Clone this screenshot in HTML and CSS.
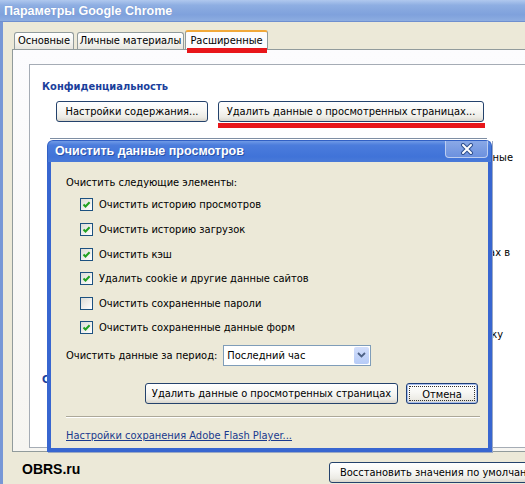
FILE: index.html
```html
<!DOCTYPE html>
<html lang="ru">
<head>
<meta charset="utf-8">
<title>Параметры Google Chrome</title>
<link rel="stylesheet" href="styles.css">
</head>
<body>
<div class="win">
  <div class="titlebar">Параметры Google Chrome</div>
  <div class="client">
    <div class="tabs">
      <div class="tab t1">Основные</div>
      <div class="tab t2">Личные материалы</div>
      <div class="tab active">Расширенные<span class="mark"></span></div>
    </div>
    <div class="page">
      <div class="scroll">
        <div class="heading">Конфиденциальность</div>
        <div class="btnrow">
          <button class="btn b-content">Настройки содержания...</button>
          <div class="marked">
            <button class="btn b-clear">Удалить данные о просмотренных страницах...</button>
            <div class="redbar"></div>
          </div>
        </div>
        <div class="rule"></div>
        <div class="tail tail1">Использовать подсказки и другие данные</div>
        <div class="tail tail2">Отправлять отчеты об ошибках в</div>
        <div class="tail tail3">Включить проверку</div>
        <div class="subhead">Сеть</div>
      </div>
    </div>
    <div class="footer">
      <span class="brand">OBRS.ru</span>
      <button class="btn restore">Восстановить значения по умолчанию</button>
    </div>
  </div>

  <div class="dialog">
    <div class="dlg-title">
      <span>Очистить данные просмотров</span>
      <span class="close"><svg width="14" height="12" viewBox="0 0 14 12"><path d="M3 2 L11 10 M11 2 L3 10" stroke="#30508f" stroke-width="4" stroke-linecap="round"/><path d="M3 2 L11 10 M11 2 L3 10" stroke="#ffffff" stroke-width="2" stroke-linecap="round"/></svg></span>
    </div>
    <div class="dlg-body">
      <div class="lead">Очистить следующие элементы:</div>
      <div class="checks">
        <label class="row"><span class="cb on"></span>Очистить историю просмотров</label>
        <label class="row"><span class="cb on"></span>Очистить историю загрузок</label>
        <label class="row"><span class="cb on"></span>Очистить кэш</label>
        <label class="row"><span class="cb on"></span>Удалить cookie и другие данные сайтов</label>
        <label class="row"><span class="cb"></span>Очистить сохраненные пароли</label>
        <label class="row"><span class="cb on"></span>Очистить сохраненные данные форм</label>
      </div>
      <div class="period">
        <span>Очистить данные за период:</span>
        <div class="select"><span class="select-text">Последний час</span><span class="select-btn"><svg width="9" height="6" viewBox="0 0 9 6"><path d="M1 1 L4.5 4.5 L8 1" fill="none" stroke="#4d6185" stroke-width="1.8"/></svg></span></div>
      </div>
      <div class="actions">
        <button class="btn b-do">Удалить данные о просмотренных страницах</button>
        <button class="btn b-cancel"><span class="focus">Отмена</span></button>
      </div>
      <div class="sep"></div>
      <a class="link" href="#">Настройки сохранения Adobe Flash Player...</a>
    </div>
  </div>
</div>
</body>
</html>
```

FILE: styles.css
```css
* { box-sizing: border-box; }
html, body { margin: 0; padding: 0; }
body {
  width: 525px;
  height: 484px;
  overflow: hidden;
  font-family: "DejaVu Sans Condensed", "DejaVu Sans", sans-serif;
  font-size: 11px;
  color: #000;
  background: #ece9d8;
}
.win {
  position: relative;
  width: 525px;
  height: 484px;
  overflow: hidden;
  background: #ece9d8;
}
.titlebar {
  height: 22px;
  padding-left: 4px;
  line-height: 22px;
  font-family: "Liberation Sans", Arial, sans-serif;
  font-size: 12.5px;
  font-weight: bold;
  color: #fff;
  background: linear-gradient(#b0c8ee, #8eaee2 25%, #7fa1dc 70%, #8dade1);
  border-bottom: 1px solid #6f8fcf;
  text-shadow: 0 0 1px #6d8cc8;
}
.client {
  height: 462px;
  border-left: 3px solid #7797d6;
  display: flex;
  flex-direction: column;
}
.tabs {
  display: flex;
  align-items: flex-end;
  height: 27px;
  padding-left: 11px;
}
.tab {
  height: 17px;
  line-height: 16px;
  border: 1px solid #919b9c;
  border-bottom: 0;
  border-radius: 3px 3px 0 0;
  background: linear-gradient(#ffffff, #f3f3ef 60%, #e6e5de);
  white-space: nowrap;
  text-align: center;
}
.t1 { width: 60px; margin-right: 3px; }
.t2 { width: 107px; margin-right: 1px; }
.tab.active {
  position: relative;
  width: 83px;
  height: 19px;
  padding-top: 1px;
  background: #fcfcfe;
  border-top: 2px solid #f1a93b;
}
.mark {
  position: absolute;
  left: 1px;
  right: 0;
  bottom: -4px;
  height: 5px;
  background: #e8161a;
}
.page {
  margin-left: 9px;
  height: 403px;
  border: 1px solid #919b9c;
  border-right: 0;
  background: linear-gradient(#fcfcfe, #f6f5f1);
  padding: 14px 0 3px 16px;
}
.scroll {
  height: 100%;
  background: #fff;
  border: 1px solid #a5acb5;
  border-right: 0;
  padding: 14px 0 0 12px;
}
.heading {
  line-height: 15px;
  font-weight: bold;
  color: #1b3f9c;
}
.btnrow {
  display: flex;
  align-items: flex-start;
  margin-top: 7px;
  padding-left: 14px;
}
.btn {
  font-family: "DejaVu Sans Condensed", "DejaVu Sans", sans-serif;
  font-size: 11px;
  color: #000;
  height: 21px;
  padding: 0 4px;
  border: 1px solid #24426c;
  border-radius: 3px;
  background: linear-gradient(#ffffff, #f7f7f4 45%, #ecebe5 80%, #d9d6cc);
  white-space: nowrap;
}
.b-content { width: 152px; }
.marked { margin-left: 10px; display: flex; flex-direction: column; }
.b-clear { width: 266px; }
.redbar { height: 5px; margin-top: 1px; margin-right: -1px; background: #e8161a; }
.rule {
  margin-top: 10px;
  margin-left: 8px;
  width: 437px;
  height: 1px;
  background: #7e8ea3;
}
.tail {
  line-height: 16px;
  white-space: nowrap;
  text-align: right;
}
.tail1 { margin-top: 11px; padding-right: 12px; }
.tail2 { margin-top: 79px; padding-right: 15px; }
.tail3 { margin-top: 66px; padding-right: 22px; }
.subhead {
  margin-top: 29px;
  line-height: 16px;
  font-weight: bold;
  color: #1b3f9c;
}
.footer {
  flex: 1;
  display: flex;
  align-items: center;
  padding-left: 19px;
}
.brand {
  font-family: "Liberation Sans", Arial, sans-serif;
  font-size: 14px;
  font-weight: bold;
  padding-top: 2px;
}
.restore {
  margin-left: auto;
  margin-right: -60px;
  margin-top: 8px;
  width: 256px;
  text-align: left;
  padding-left: 10px;
}

/* dialog */
.dialog {
  position: absolute;
  left: 47px;
  top: 140px;
  width: 445px;
  height: 312px;
  display: flex;
  flex-direction: column;
  box-shadow: 1px 1px 0 #9aa8c4;
}
.dlg-title {
  height: 22px;
  flex: none;
  display: flex;
  justify-content: space-between;
  align-items: flex-start;
  padding-left: 7px;
  border-radius: 6px 6px 0 0;
  background: linear-gradient(#6f9ae6, #4b7cdc 20%, #4073d8 75%, #4a7ad8);
  border: 1px solid #3160c4;
  border-bottom: 0;
  color: #fff;
  font-family: "Liberation Sans", Arial, sans-serif;
  font-size: 12.5px;
  font-weight: bold;
  line-height: 21px;
}
.dlg-title > span:first-child { text-shadow: 1px 1px 0 #2a52a8; }
.close {
  width: 43px;
  height: 17px;
  margin-right: 3px;
  display: flex;
  align-items: center;
  justify-content: center;
  border: 1px solid #bccdf0;
  border-top: 0;
  border-radius: 0 0 4px 4px;
  background: linear-gradient(#8aa9e6, #6c91de);
}
.close svg { display: block; }
.dlg-body {
  flex: 1;
  border: 4px solid #3866d0;
  border-top: 0;
  background: #ece9d8;
  padding: 13px 8px 0 15px;
}
.lead { line-height: 16px; }
.checks { margin-top: 1.7px; padding-left: 14px; }
.row {
  display: flex;
  align-items: center;
  height: 24.6px;
}
.cb {
  width: 13px;
  height: 13px;
  margin-right: 6px;
  border: 1px solid #1c5180;
  background: linear-gradient(135deg, #dcdcd6, #ffffff);
  flex: none;
}
.cb.on {
  background:
    url("data:image/svg+xml;utf8,<svg xmlns='http://www.w3.org/2000/svg' width='11' height='11'><path d='M2.5 5.5 L4.5 7.5 L8.6 3.2' fill='none' stroke='%2321a121' stroke-width='2'/></svg>") center/11px 11px no-repeat,
    linear-gradient(135deg, #dcdcd6, #ffffff);
}
.period {
  display: flex;
  align-items: center;
  margin-top: 4.7px;
  height: 21px;
}
.select {
  margin-left: 6px;
  width: 148px;
  height: 21px;
  border: 1px solid #7f9db9;
  background: #fff;
  display: flex;
}
.select-text { flex: 1; padding-left: 3px; line-height: 19px; }
.select-btn {
  width: 15px;
  margin: 1px;
  border-radius: 2px;
  background: linear-gradient(#d2defb, #b6cbf7);
  display: flex;
  align-items: center;
  justify-content: center;
}
.actions {
  display: flex;
  justify-content: flex-end;
  gap: 8px;
  margin-top: 17px;
  padding-right: 2px;
}
.b-do { width: 253px; }
.b-cancel {
  width: 72px;
  padding: 2px;
  border-color: #1f3f79;
  box-shadow: inset 0 0 0 1px #a9c0ee;
}
.focus {
  display: block;
  height: 100%;
  line-height: 15px;
  border: 1px dotted #333;
}
.sep {
  margin-top: 12px;
  height: 2px;
  border-top: 1px solid #aca899;
  border-bottom: 1px solid #fff;
}
.link {
  display: block;
  margin-top: 10px;
  line-height: 16px;
  color: #1a3a8e;
  text-decoration: underline;
}
```
